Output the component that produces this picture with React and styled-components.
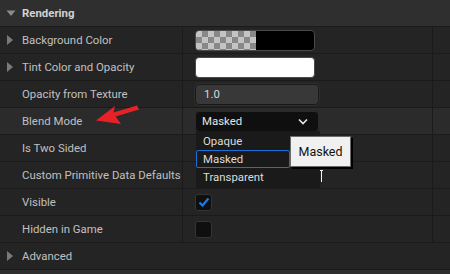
import React from "react";
import styled, { createGlobalStyle } from "styled-components";

const Global = createGlobalStyle`
  html, body { margin: 0; padding: 0; background: #242424; }
  body { font-family: Roboto, "Noto Sans", "Liberation Sans", sans-serif; }
`;

const Panel = styled.div`
  position: relative;
  width: 450px;
  height: 274px;
  background: #2e2e2e;
  overflow: hidden;
  font-size: 11.4px;
  color: #c0c0c0;
`;

const Header = styled.div`
  height: 26px;
  display: flex;
  align-items: center;
  gap: 6px;
  padding-left: 6px;
  background: #2f2f2f;
  border-bottom: 1px solid #1b1b1b;
  font-weight: 700;
  color: #d2d2d2;
`;

const Row = styled.div`
  height: 26px;
  display: flex;
  background: ${(p) => (p.$hover ? "#2b2b2b" : "#242424")};
  border-bottom: 1px solid #1b1b1b;
`;

const NameCell = styled.div`
  width: 183px;
  flex: none;
  display: flex;
  align-items: center;
  gap: 6px;
  padding-left: 6px;
  box-sizing: border-box;
  border-right: ${(p) => (p.$full ? "none" : "1px solid #1b1b1b")};
  white-space: nowrap;
`;

const Slot = styled.span`
  width: 10px;
  display: flex;
  align-items: center;
  justify-content: center;
`;

const ValueCell = styled.div`
  width: 250px;
  flex: none;
  display: flex;
  align-items: center;
  padding-left: 12px;
  box-sizing: border-box;
  border-right: 1px solid #1b1b1b;
`;

const Tail = styled.div`
  flex: 1;
`;

const Swatch = styled.div`
  width: 120px;
  height: 21px;
  box-sizing: border-box;
  border: 1px solid #4a4a4a;
  border-radius: 4px;
  overflow: hidden;
  display: flex;
  background: ${(p) => p.$color};
`;

const Checker = styled.div`
  width: 60px;
  height: 100%;
  background-color: #c4c4c4;
  background-image: linear-gradient(45deg, #888 25%, transparent 25%, transparent 75%, #888 75%),
    linear-gradient(45deg, #888 25%, transparent 25%, transparent 75%, #888 75%);
  background-size: 12px 12px;
  background-position: 0 0, 6px 6px;
`;

const NumberInput = styled.div`
  width: 124px;
  height: 21px;
  box-sizing: border-box;
  border: 1px solid #1a1a1a;
  border-radius: 4px;
  background: #383838;
  display: flex;
  align-items: center;
  padding-left: 8px;
  color: #d8d8d8;
  box-shadow: 0 0 0 1px #2e2e2e;
`;

const Combo = styled.div`
  width: 124px;
  height: 21px;
  box-sizing: border-box;
  border: 1px solid #2a2a2a;
  border-radius: 4px;
  background: #0f0f0f;
  display: flex;
  align-items: center;
  justify-content: space-between;
  padding: 0 10px 0 6px;
  color: #e4e4e4;
`;

const CheckBox = styled.div`
  width: 17px;
  height: 17px;
  box-sizing: border-box;
  border: 1px solid #343434;
  border-radius: 3px;
  background: #0f0f0f;
  display: flex;
  align-items: center;
  justify-content: center;
`;

const Footer = styled.div`
  height: 4px;
  background: #2e2e2e;
`;

const Menu = styled.div`
  position: absolute;
  left: 196px;
  top: 131px;
  width: 124px;
  height: 57px;
  background: #1a1a1a;
  display: flex;
  flex-direction: column;
  padding-top: 1px;
  box-sizing: border-box;
`;

const MenuItem = styled.div`
  height: 18px;
  width: ${(p) => (p.$selected ? "94px" : "auto")};
  box-sizing: border-box;
  display: flex;
  align-items: center;
  padding-left: 6px;
  color: #dcdcdc;
  border: 1px solid ${(p) => (p.$selected ? "#1b6fd6" : "transparent")};
  border-radius: 2px;
`;

const Tooltip = styled.div`
  position: absolute;
  left: 290px;
  top: 136px;
  width: 61px;
  height: 31px;
  box-sizing: border-box;
  background: #f0f0f0;
  border: 1px solid #6a6a6a;
  box-shadow: 2px 2px 0 #000;
  display: flex;
  align-items: center;
  justify-content: center;
  color: #111;
  font-size: 12.5px;
`;

const Overlay = styled.svg`
  position: absolute;
  left: 0;
  top: 0;
  pointer-events: none;
`;

const Tri = ({ down }) => (
  <svg width="10" height="10" viewBox="0 0 10 10">
    {down ? (
      <polygon points="0.5,2.5 9.5,2.5 5,8" fill="#8a8a8a" />
    ) : (
      <polygon points="1,0 7,5 1,10" fill="#7a7a7a" />
    )}
  </svg>
);

const props = [
  { name: "Background Color", arrow: true, value: "bg" },
  { name: "Tint Color and Opacity", arrow: true, value: "tint" },
  { name: "Opacity from Texture", value: "num" },
  { name: "Blend Mode", value: "combo", hover: true },
  { name: "Is Two Sided", value: "none" },
  { name: "Custom Primitive Data Defaults", value: "none" },
  { name: "Visible", value: "checked" },
  { name: "Hidden in Game", value: "unchecked" },
];

function renderValue(v) {
  switch (v) {
    case "bg":
      return (
        <Swatch $color="#000">
          <Checker />
        </Swatch>
      );
    case "tint":
      return <Swatch $color="#fff" />;
    case "num":
      return <NumberInput>1.0</NumberInput>;
    case "combo":
      return (
        <Combo>
          <span>Masked</span>
          <svg width="10" height="7" viewBox="0 0 10 7">
            <polyline points="1,1.5 5,5.5 9,1.5" fill="none" stroke="#e8e8e8" strokeWidth="1.6" />
          </svg>
        </Combo>
      );
    case "checked":
      return (
        <CheckBox>
          <svg width="12" height="10" viewBox="0 0 12 10">
            <polyline points="1.5,5.5 4.5,8.5 10.5,1.5" fill="none" stroke="#1f7be0" strokeWidth="2.2" />
          </svg>
        </CheckBox>
      );
    case "unchecked":
      return <CheckBox />;
    default:
      return null;
  }
}

export default function App() {
  return (
    <>
      <Global />
      <Panel>
        <Header>
          <Slot>
            <Tri down />
          </Slot>
          Rendering
        </Header>
        {props.map((p) => (
          <Row key={p.name} $hover={p.hover}>
            <NameCell>
              <Slot>{p.arrow && <Tri />}</Slot>
              {p.name}
            </NameCell>
            <ValueCell>{renderValue(p.value)}</ValueCell>
            <Tail />
          </Row>
        ))}
        <Row>
          <NameCell $full>
            <Slot>
              <Tri />
            </Slot>
            Advanced
          </NameCell>
        </Row>
        <Footer />

        <Menu>
          <MenuItem>Opaque</MenuItem>
          <MenuItem $selected>Masked</MenuItem>
          <MenuItem>Transparent</MenuItem>
        </Menu>
        <Tooltip>Masked</Tooltip>

        <Overlay width="450" height="274" viewBox="0 0 450 274">
          <polygon
            points="96,120.5 115,106 113.5,112.5 137,105.5 139,109.5 115.5,116.5 121,124"
            fill="#e82127"
          />
          <g stroke="#f2f2f2" strokeWidth="1" fill="none">
            <line x1="321.5" y1="170" x2="321.5" y2="182" />
            <line x1="320" y1="170.5" x2="323" y2="170.5" />
          </g>
        </Overlay>
      </Panel>
    </>
  );
}
